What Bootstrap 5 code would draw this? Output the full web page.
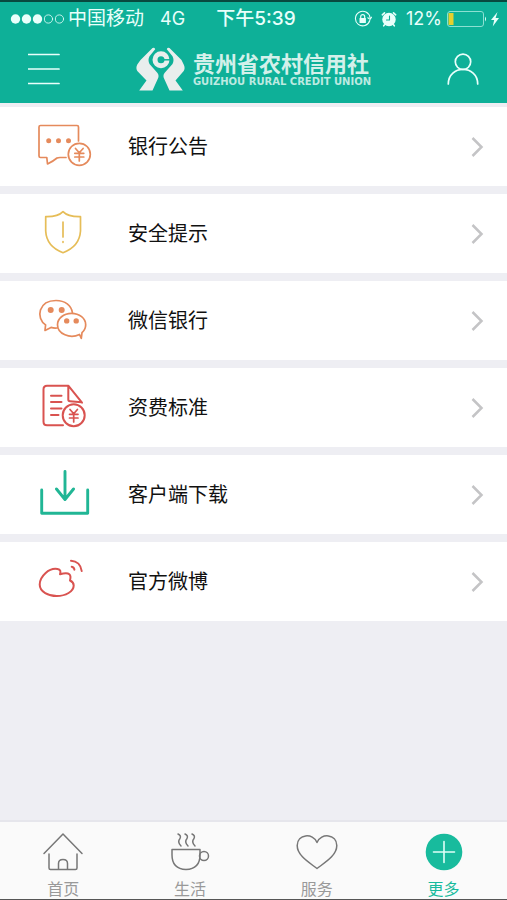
<!DOCTYPE html>
<html lang="zh-CN">
<head>
<meta charset="utf-8">
<meta name="viewport" content="width=device-width, initial-scale=1">
<title>贵州省农村信用社</title>
<link href="https://cdn.jsdelivr.net/npm/bootstrap@5.3.0/dist/css/bootstrap.min.css" rel="stylesheet">
<style>
  body { font-family: "Liberation Sans", "Noto Sans CJK SC", sans-serif; background: #eeeef3; color: #111; }
  svg { display: block; flex: none; fill: none; stroke: currentColor; stroke-linecap: round; stroke-linejoin: round; }
  .app-head { background: #0eb098; border-top: 2px solid #08493f; color: #e9fffb; }
  .status-row { display: grid; grid-template-columns: 1fr auto 1fr; align-items: center; height: 33px; padding: 0 5px 0 10px; font-size: 19px; line-height: 24px; }
  .status-time { font-family: Inter, "Noto Sans CJK SC", sans-serif; font-weight: 500; font-size: 19px; }
  .status-num { font-family: Inter, sans-serif; font-size: 18px; }
  .title-row { height: 68px; padding: 0 28px; }
  .icon-btn { background: none; border: 0; padding: 0; color: inherit; }
  .brand-name { font-size: 22px; line-height: 24px; font-weight: 700; color: #d3f0ea; }
  .brand-sub { font-family: "DejaVu Sans", sans-serif; font-size: 10px; line-height: 9px; font-weight: 700; color: #bdeae1; }
  .menu-row { height: 79px; gap: 32px; padding: 0 22px 0 32px; font-size: 20px; line-height: 30px; color: #111; background: #fff; }
  .menu-row:hover { color: #111; }
  .c-orange { color: #e58a5c; } .c-yellow { color: #e6bd58; } .c-red { color: #d95350; } .c-green { color: #21b695; }
  .chev { color: #c4c4c6; }
  .tab-bar { background: #fafafa; border-top: 2px solid #e6e6ec; border-bottom: 1px solid #555; }
  .tab-item { gap: 9px; color: #999; font-size: 16px; line-height: 18px; padding: 8px 0 0; }
  .tab-item svg { color: #777; }
  .tab-item.active, .tab-item.active svg { color: #18bb9d; }
</style>
<script src="https://cdn.jsdelivr.net/npm/bootstrap@5.3.0/dist/js/bootstrap.bundle.min.js"></script>
</head>
<body>
<div class="d-flex flex-column min-vh-100">
  <header class="app-head">
    <div class="status-row">
      <div class="d-flex align-items-center">
        <svg width="54" height="12" viewBox="0 0 54 12" aria-hidden="true"><g fill="currentColor" stroke="none"><circle cx="5.500" cy="6" r="4.700"/><circle cx="16.500" cy="6" r="4.700"/><circle cx="27.500" cy="6" r="4.700"/></g><circle cx="38.500" cy="6" r="4.100" stroke-width=".8"/><circle cx="49.500" cy="6" r="4.100" stroke-width=".8"/></svg>
        <span class="ms-1 me-3">中国移动</span><span class="status-num">4G</span>
      </div>
      <div class="status-time">下午5:39</div>
      <div class="d-flex align-items-center justify-content-end">
        <svg class="me-2" width="18" height="18" viewBox="0 0 18 18" aria-hidden="true"><path d="M15.800 10.500A7.300 7.300 0 1 1 16 7.600M13.800 7.800l2.200 1.600 1.600-2.200" stroke-width="1.100"/><path d="M6.700 8.400V6.700a2 2 0 0 1 4 0v1.700" stroke-width="1.200"/><rect x="5.500" y="8" width="6.400" height="5" rx=".6" fill="currentColor" stroke="none"/></svg>
        <svg class="me-2" width="18" height="18" viewBox="0 0 18 18" aria-hidden="true"><circle cx="9" cy="9.500" r="6.700" fill="currentColor" stroke="none"/><path d="M2.300 4.800 4.500 2.800M15.700 4.800l-2.200-2M4.500 14.800l-.8 1M13.500 14.800l.8 1" stroke-width="1.600"/><path d="M9.500 6v4H6.500" stroke="#0eb098" stroke-width="1.100"/></svg>
        <span class="status-num me-1">12%</span>
        <svg width="56" height="18" viewBox="0 0 56 18" aria-hidden="true"><rect x="1.500" y="1.500" width="36" height="15" rx="2.500" stroke="#8ce0d2" stroke-width="1"/><path d="M2.500 3h5v12h-5z" fill="#e5d02d" stroke="none"/><path d="M39 6.500q2 2.500 0 5z" fill="currentColor" stroke="none"/><path d="m51.500 2-6.500 8h3.200l-1.500 6.500 6.300-8.500h-3.400z" fill="currentColor" stroke="none"/></svg>
      </div>
    </div>
    <div class="title-row d-flex align-items-center justify-content-between">
      <button class="icon-btn" type="button" aria-label="菜单"><svg width="32" height="32" viewBox="0 0 32 32"><path d="M.5 1.500h30.500M.5 16h30.500M.5 30.500h30.500" stroke-width="1.700"/></svg></button>
      <div class="d-flex align-items-center gap-2">
        <svg width="49" height="45" viewBox="0 0 49 45" aria-hidden="true"><g fill="#e9eeed" stroke="none"><path d="M16.500 1Q18.500 .2 19.200 2.200L13.500 9.200Q11.500 13 13.500 17L21.500 26Q23.500 28.500 21.700 32L16.500 43.500H3.200L10.500 33.500 1.300 24Q-.5 21 1.300 17.500L4.500 13Z"/><path d="M33.500 1Q31.500 .2 30.800 2.200L36.500 9.200Q38.500 13 36.500 17L28.500 26Q26.500 28.500 28.300 32L33.500 43.500H46.800L39.500 33.500 47.700 24Q49.500 21 47.700 17.500L45.500 13Z"/></g><circle cx="25" cy="12.800" r="6" stroke="#e9eeed" stroke-width="5"/><path d="M26 12.800h9" stroke="#0eb098" stroke-width="1.500" stroke-linecap="butt"/></svg>
        <div>
          <div class="brand-name">贵州省农村信用社</div>
          <div class="brand-sub">GUIZHOU RURAL CREDIT UNION</div>
        </div>
      </div>
      <button class="icon-btn" type="button" aria-label="我的"><svg width="32" height="32" viewBox="0 0 32 32"><circle cx="16" cy="8.800" r="7.700" stroke-width="1.700"/><path d="M1.300 31C1.300 11.500 30.700 11.500 30.700 31" stroke-width="1.700"/></svg></button>
    </div>
  </header>

  <main class="flex-grow-1 pt-1">
    <nav class="d-grid gap-2" aria-label="更多">
      <a href="#" class="menu-row d-flex align-items-center text-decoration-none">
        <svg class="c-orange" width="64" height="57" viewBox="0 0 64 57" stroke-width="1.700"><path d="M46.500 23V9q0-1.500-1.500-1.500H8.500Q7 7.500 7 9v29q0 1.500 1.500 1.500h6.300l.7 6.500q6-3 9.500-6Q26 39.500 28 39.500h6"/><g fill="currentColor" stroke="none"><circle cx="16.700" cy="22.700" r="2.500"/><circle cx="26.500" cy="22.700" r="2.500"/><circle cx="36.500" cy="22.700" r="2.500"/></g><circle cx="47.300" cy="36.300" r="11"/><path d="m43.500 30.500 3.800 4.300 3.800-4.300M42.800 35.300h9M42.800 39h9M47.300 35v8"/></svg>
        <span class="flex-grow-1">银行公告</span>
        <svg class="chev" width="14" height="22" viewBox="0 0 14 22" stroke-width="2.500"><path d="m1.500 2 9 9-9 9" stroke-linecap="butt" stroke-linejoin="miter"/></svg>
      </a>
      <a href="#" class="menu-row d-flex align-items-center text-decoration-none">
        <svg class="c-yellow" width="64" height="57" viewBox="0 0 64 57" stroke-width="1.700"><path d="M31 6.700Q26 12 13.700 11.700V26Q14.500 41.500 31 47.700 47.500 41.500 48.500 26V11.700Q36 12 31 6.700ZM31 17v15M31 36.500v.8"/></svg>
        <span class="flex-grow-1">安全提示</span>
        <svg class="chev" width="14" height="22" viewBox="0 0 14 22" stroke-width="2.500"><path d="m1.500 2 9 9-9 9" stroke-linecap="butt" stroke-linejoin="miter"/></svg>
      </a>
      <a href="#" class="menu-row d-flex align-items-center text-decoration-none">
        <svg class="c-orange" width="64" height="57" viewBox="0 0 64 57" stroke-width="1.700"><path d="M25 36q-3 .4-6-.6l-6 3 .6-5.500C3.500 26 6.500 8.500 24 8.500c9 0 15.500 5 16.500 12.500"/><path d="M47.500 42.500C38 47 25.500 42 25.500 32.700c0-6 6-11.400 14-11.400s14.200 5.300 14.200 11.400q0 4.500-3.700 8l-.7 5.600z"/><g fill="currentColor" stroke="none"><circle cx="18.700" cy="18" r="3"/><circle cx="29.700" cy="18" r="3"/><circle cx="34.700" cy="28.900" r="2.700"/><circle cx="44.200" cy="28.900" r="2.700"/></g></svg>
        <span class="flex-grow-1">微信银行</span>
        <svg class="chev" width="14" height="22" viewBox="0 0 14 22" stroke-width="2.500"><path d="m1.500 2 9 9-9 9" stroke-linecap="butt" stroke-linejoin="miter"/></svg>
      </a>
      <a href="#" class="menu-row d-flex align-items-center text-decoration-none">
        <svg class="c-red" width="64" height="57" viewBox="0 0 64 57" stroke-width="2"><path d="M31 46.300H15q-3.500 0-3.500-3.500V10.200q0-3.500 3.500-3.500h21.300L50 23.700M36.300 7.500v13q0 1.700 1.700 1.800l11.500 1M19 16.700h10.500M19 23h10.500M19 29.500h10.500M19 36h7.500"/><circle cx="41.700" cy="36.300" r="11"/><path d="m38 30.500 3.700 4.300 3.700-4.300M37.500 35.300h8.500M37.500 39h8.500M41.700 35v8" stroke-width="1.700"/></svg>
        <span class="flex-grow-1">资费标准</span>
        <svg class="chev" width="14" height="22" viewBox="0 0 14 22" stroke-width="2.500"><path d="m1.500 2 9 9-9 9" stroke-linecap="butt" stroke-linejoin="miter"/></svg>
      </a>
      <a href="#" class="menu-row d-flex align-items-center text-decoration-none">
        <svg class="c-green" width="64" height="57" viewBox="0 0 64 57" stroke-width="2.900"><path d="M9.700 24v23.300h46V24M33 5.500V33M24.500 23 33 33.500 41.500 23"/></svg>
        <span class="flex-grow-1">客户端下载</span>
        <svg class="chev" width="14" height="22" viewBox="0 0 14 22" stroke-width="2.500"><path d="m1.500 2 9 9-9 9" stroke-linecap="butt" stroke-linejoin="miter"/></svg>
      </a>
      <a href="#" class="menu-row d-flex align-items-center text-decoration-none">
        <svg class="c-red" width="64" height="57" viewBox="0 0 64 57" stroke-width="2"><path d="M25.500 16C17 14.500 7.700 23.500 7.700 31.500c0 7.500 9 11.500 17 11.500 9 0 17-4.500 17-10.500 0-2.500-1.500-4-3.700-5 1.500-5.500 0-9-10-6.200 1-3 .4-4.800-2.500-5.300ZM39 7.700c6 .3 10 4.500 10.700 10.300M39.700 13.700q2.500.5 2.700 3"/></svg>
        <span class="flex-grow-1">官方微博</span>
        <svg class="chev" width="14" height="22" viewBox="0 0 14 22" stroke-width="2.500"><path d="m1.500 2 9 9-9 9" stroke-linecap="butt" stroke-linejoin="miter"/></svg>
      </a>
    </nav>
  </main>

  <nav class="tab-bar row g-0 text-center" aria-label="主导航">
    <a href="#" class="tab-item col d-flex flex-column align-items-center text-decoration-none">
      <svg width="42" height="42" viewBox="0 0 42 42" stroke-width="1.500"><path d="M2 23.500 21 4l19 19.500M7 24v14q0 1.500 1.500 1.500h25q1.500 0 1.500-1.500V24M16.500 39v-5.500q0-4 4.500-4t4.500 4V39"/></svg>首页</a>
    <a href="#" class="tab-item col d-flex flex-column align-items-center text-decoration-none">
      <svg width="42" height="42" viewBox="0 0 42 42" stroke-width="1.500"><path d="M3 19.500h28V25q0 14-14 14.500Q3 39 3 25zM9 4q3.500 1.500 2 4.500-3 3.500 1 7.500M16 4q3.500 1.500 2 4.500-3 3.500 1 7.500M23 4q3.500 1.500 2 4.500-3 3.500 1 7.500"/><circle cx="35" cy="26" r="4.500"/></svg>生活</a>
    <a href="#" class="tab-item col d-flex flex-column align-items-center text-decoration-none">
      <svg width="42" height="42" viewBox="0 0 42 42" stroke-width="1.500"><path d="M21 38.500C14 33 1.200 26 1.200 15.500 1.200 4 17 2.500 21 12.500 25 2.500 40.800 4 40.800 15.500 40.800 26 28 33 21 38.500Z"/></svg>服务</a>
    <a href="#" class="tab-item active col d-flex flex-column align-items-center text-decoration-none" aria-current="page">
      <svg width="42" height="42" viewBox="0 0 42 42"><circle cx="21" cy="22" r="18.300" fill="currentColor" stroke="none"/><path d="M10.500 22h21M21 11.500v21" stroke="#dffff8" stroke-width="1.600"/></svg>更多</a>
  </nav>
</div>
</body>
</html>
